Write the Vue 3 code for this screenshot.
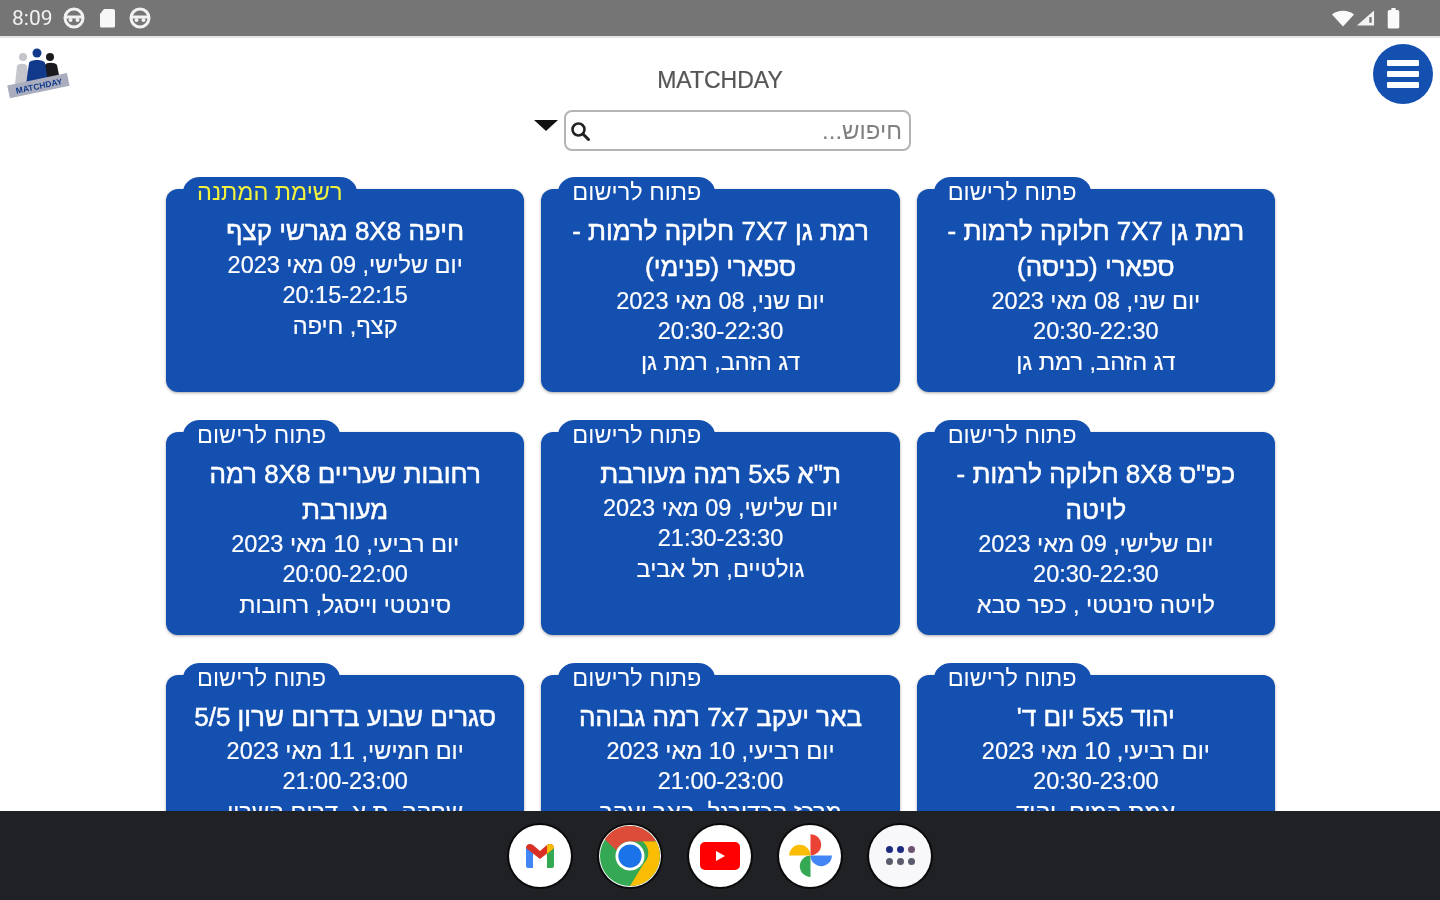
<script setup>
const events = [
  { status: 'פתוח לרישום', title: 'רמת גן 7X7 חלוקה לרמות - ספארי (כניסה)', date: 'יום שני, 08 מאי 2023', time: '20:30-22:30', place: 'דג הזהב, רמת גן' },
  { status: 'פתוח לרישום', title: 'רמת גן 7X7 חלוקה לרמות - ספארי (פנימי)', date: 'יום שני, 08 מאי 2023', time: '20:30-22:30', place: 'דג הזהב, רמת גן' },
  { status: 'רשימת המתנה', wait: true, title: 'חיפה 8X8 מגרשי קצף', date: 'יום שלישי, 09 מאי 2023', time: '20:15-22:15', place: 'קצף, חיפה' },
  { status: 'פתוח לרישום', title: 'כפ"ס 8X8 חלוקה לרמות - לויטה', date: 'יום שלישי, 09 מאי 2023', time: '20:30-22:30', place: 'לויטה סינטטי , כפר סבא' },
  { status: 'פתוח לרישום', title: 'ת"א 5x5 רמה מעורבת', date: 'יום שלישי, 09 מאי 2023', time: '21:30-23:30', place: 'גולטיים, תל אביב' },
  { status: 'פתוח לרישום', title: 'רחובות שעריים 8X8 רמה מעורבת', date: 'יום רביעי, 10 מאי 2023', time: '20:00-22:00', place: 'סינטטי וייסגל, רחובות' },
  { status: 'פתוח לרישום', title: "יהוד 5x5 יום ד'", date: 'יום רביעי, 10 מאי 2023', time: '20:30-23:00', place: 'אמת המים, יהוד' },
  { status: 'פתוח לרישום', title: 'באר יעקב 7x7 רמה גבוהה', date: 'יום רביעי, 10 מאי 2023', time: '21:00-23:00', place: 'מרכז הכדורגל, באר יעקב' },
  { status: 'פתוח לרישום', title: 'סגרים שבוע בדרום שרון 5/5', date: 'יום חמישי, 11 מאי 2023', time: '21:00-23:00', place: 'שחקה, ת.א, דרום השרון' },
]
</script>

<template>
  <div class="screen">
    <div class="status">
      <div class="status-side">
        <span class="clock">8:09</span>
        <svg class="si" viewBox="0 0 22 22"><circle cx="11" cy="11" r="9" fill="none" stroke="#f2f2f2" stroke-width="3"/><path d="M3 8.500h16v3H3z" fill="#f2f2f2"/><circle cx="7.500" cy="13" r="2" fill="#f2f2f2"/><circle cx="14.500" cy="13" r="2" fill="#f2f2f2"/></svg>
        <svg class="si sd" viewBox="0 0 18 20"><path d="M6 1h9a2 2 0 0 1 2 2v15a1.500 1.500 0 0 1-1.500 1.500h-12A1.500 1.500 0 0 1 2 18V6z" fill="#f7f7f7"/></svg>
        <svg class="si" viewBox="0 0 22 22"><circle cx="11" cy="11" r="9" fill="none" stroke="#f2f2f2" stroke-width="3"/><path d="M3 8.500h16v3H3z" fill="#f2f2f2"/><circle cx="7.500" cy="13" r="2" fill="#f2f2f2"/><circle cx="14.500" cy="13" r="2" fill="#f2f2f2"/></svg>
      </div>
      <div class="status-side">
        <svg class="wifi" viewBox="0 0 24 18"><path d="M1 5.500C7 .5 17 .5 23 5.500L12 17.500z" fill="#fafafa"/></svg>
        <svg class="signal" viewBox="0 0 20 18"><path d="M1 17 19 1v16z" fill="#f2f2f2"/><path d="M14 8h2.500v6H14z" fill="#757575"/></svg>
        <svg class="battery" viewBox="0 0 12 20"><path d="M4 0h4v2h2a1.500 1.500 0 0 1 1.500 1.500V18a1.500 1.500 0 0 1-1.500 1.500H2A1.500 1.500 0 0 1 .5 18V3.500A1.500 1.500 0 0 1 2 2h2z" fill="#fafafa"/></svg>
      </div>
    </div>

    <main class="content">
      <header class="top">
        <svg class="logo" viewBox="0 0 64 54">
          <circle cx="16" cy="9" r="4" fill="#c4c6cc"/>
          <path d="M8 36 10 18c1-3 9-3 10 0l3 18z" fill="#c4c6cc"/>
          <circle cx="43" cy="9" r="4" fill="#1a1a1f"/>
          <path d="M37 32 38 17c1-3 10-3 12 0l3 15z" fill="#1a1a1f"/>
          <circle cx="30" cy="5" r="4.500" fill="#123a8c"/>
          <path d="M19 37 22 15c1-4 15-4 16 0l3 19z" fill="#123a8c"/>
          <g transform="rotate(-12 32 38)">
            <rect x="1" y="31" width="61" height="13" fill="#a9adbd"/>
            <text x="32" y="41" text-anchor="middle" class="logo-text">MATCHDAY</text>
          </g>
        </svg>
        <h1 class="brand">MATCHDAY</h1>
        <button class="menu" type="button" aria-label="menu"><i></i><i></i><i></i></button>
      </header>

      <div class="search-row">
        <span class="caret"></span>
        <label class="search" dir="rtl">
          <input type="text" placeholder="חיפוש..." />
          <svg class="lens" viewBox="0 0 22 22"><circle cx="9.500" cy="9.500" r="6" fill="none" stroke="#222" stroke-width="2.600"/><path d="m14 14 5.500 5.500" stroke="#222" stroke-width="3" stroke-linecap="round"/></svg>
        </label>
      </div>

      <section class="grid" dir="rtl">
        <article v-for="(e, i) in events" :key="i" class="card">
          <div class="tab" :class="{ wait: e.wait }"><span>{{ e.status }}</span></div>
          <h2>{{ e.title }}</h2>
          <p>{{ e.date }}</p>
          <p>{{ e.time }}</p>
          <p>{{ e.place }}</p>
        </article>
      </section>
    </main>

    <nav class="dock">
      <div class="app">
        <svg viewBox="0 0 40 40"><path d="M6 32V12l5-3 2 4v19H8a2 2 0 0 1-2-2z" fill="#4285f4"/><path d="M34 32V12l-5-3-2 4v19h5a2 2 0 0 0 2-2z" fill="#34a853"/><path d="M6 12c0-4 4-5 7-3l7 6 7-6c3-2 7-1 7 3l-14 11z" fill="#d93025"/><path d="M27 9c3-2 7-1 7 3l-7 6z" fill="#fbbc04"/></svg>
      </div>
      <div class="app chrome">
        <svg viewBox="0 0 64 64"><circle cx="32" cy="32" r="31" fill="#34a853"/><path d="M32 1a31 31 0 0 1 27 16H32a15 15 0 0 0-14 9L6 15A31 31 0 0 1 32 1z" fill="#dd4b39"/><path d="M59 17a31 31 0 0 1-27 46l14-23a15 15 0 0 0-1-23z" fill="#fbbc04"/><circle cx="32" cy="32" r="15" fill="#fff"/><circle cx="32" cy="32" r="12" fill="#1a73e8"/></svg>
      </div>
      <div class="app">
        <svg viewBox="0 0 40 40"><rect x="0" y="6" width="40" height="28" rx="5" fill="#f00"/><path d="M16 15 25 20 16 25z" fill="#fff"/></svg>
      </div>
      <div class="app photos">
        <svg viewBox="0 0 40 40"><path d="M20 20V1a9.500 9.500 0 0 1 0 19z" fill="#ea4335"/><path d="M20 20h19a9.500 9.500 0 0 1-19 0z" fill="#4285f4"/><path d="M20 20v19a9.500 9.500 0 0 1 0-19z" fill="#34a853"/><path d="M20 20H1a9.500 9.500 0 0 1 19 0z" fill="#fbbc04"/></svg>
      </div>
      <div class="app apps">
        <span class="d1"></span><span class="d1"></span><span class="d2"></span>
        <span class="d3"></span><span class="d3"></span><span class="d3"></span>
      </div>
    </nav>
  </div>
</template>

<style>
html, body { margin: 0; background: #fff; }
</style>

<style scoped>
.screen {
  width: 1440px;
  height: 900px;
  display: flex;
  flex-direction: column;
  overflow: hidden;
  background: #fff;
  font-family: "Liberation Sans", Arimo, sans-serif;
  filter: blur(0.7px);
}
.status {
  height: 36px;
  flex: none;
  background: #757575;
  border-bottom: 2px solid #e4e4e4;
  box-sizing: content-box;
  display: flex;
  justify-content: space-between;
  align-items: center;
  padding: 0 40px 0 12px;
}
.status-side { display: flex; align-items: center; gap: 12px; }
.clock { color: #f2f2f2; font: 21px Roboto, sans-serif; margin-right: -2px; }
.si { width: 22px; height: 22px; }
.sd { width: 18px; height: 20px; margin: 0 1px; }
.wifi { width: 24px; height: 18px; margin-right: -11px; }
.signal { width: 19px; height: 18px; }
.battery { width: 13px; height: 21px; }

.content { flex: 1; min-height: 0; overflow: hidden; }
.top {
  display: grid;
  grid-template-columns: 1fr auto 1fr;
  align-items: start;
  padding: 6px 7px 0 7px;
  height: 65px;
  box-sizing: border-box;
}
.logo { width: 64px; height: 54px; margin-top: 4px; }
.logo-text { font: 900 8.500px "Liberation Sans", sans-serif; fill: #123a8c; }
.brand {
  margin: 23px 0 0;
  font: 400 23px/26px "Liberation Sans", sans-serif;
  color: #555;
  -webkit-text-stroke: .2px #555;
}
.menu {
  justify-self: end;
  width: 60px;
  height: 60px;
  padding: 0;
  border: none;
  border-radius: 50%;
  background: #1450b0;
  display: flex;
  flex-direction: column;
  align-items: center;
  justify-content: center;
  gap: 5px;
}
.menu i { width: 32px; height: 6px; background: #fff; border-radius: 1px; }

.search-row {
  display: flex;
  justify-content: center;
  gap: 6px;
  padding-left: 5px;
  margin-top: 7px;
}
.caret {
  margin-top: 10px;
  width: 0;
  height: 0;
  border-left: 12px solid transparent;
  border-right: 12px solid transparent;
  border-top: 11px solid #111;
}
.search {
  width: 347px;
  height: 41px;
  box-sizing: border-box;
  display: flex;
  align-items: center;
  border: 2px solid #b4b4b4;
  border-radius: 8px;
  padding: 0 7px 0 3px;
}
.search input {
  flex: 1;
  min-width: 0;
  border: none;
  outline: none;
  background: transparent;
  padding: 0;
  font: 24px "Liberation Sans", sans-serif;
}
.search input::placeholder { color: #808080; opacity: 1; }
.lens { width: 22px; height: 22px; flex: none; }

.grid {
  width: 1109px;
  margin: 38px 0 0 166px;
  display: grid;
  grid-template-columns: repeat(3, 1fr);
  gap: 40px 17px;
}
.card {
  position: relative;
  height: 203px;
  box-sizing: border-box;
  padding: 24px 20px 0;
  background: #1450b0;
  border-radius: 12px;
  box-shadow: 0 1px 3px rgba(0, 0, 0, .35);
  color: #fff;
  text-align: center;
}
.card h2 {
  margin: 0 0 1px;
  font-size: 26px;
  font-weight: 400;
  line-height: 36px;
  -webkit-text-stroke: .5px #fff;
}
.card p {
  margin: 0;
  font-size: 23.500px;
  line-height: 30.400px;
  -webkit-text-stroke: .2px #fff;
}
.tab {
  position: absolute;
  top: -12px;
  left: 31px;
  font-size: 23.500px;
}
.tab span {
  position: relative;
  z-index: 1;
  display: block;
  height: 24px;
  line-height: 30px;
}
.tab::before {
  content: "";
  position: absolute;
  top: 0;
  left: -14px;
  right: -14px;
  height: 24px;
  background: #1450b0;
  border-radius: 17px 17px 0 0 / 15px 15px 0 0;
}
.tab.wait { color: #f2f23c; }

.dock {
  height: 89px;
  flex: none;
  background: #202124;
  display: flex;
  justify-content: center;
  align-items: center;
  gap: 28px;
  position: relative;
}
.app {
  width: 62px;
  height: 62px;
  border-radius: 50%;
  background: #fff;
  box-shadow: 0 0 0 2px #0a0a0c;
  display: flex;
  align-items: center;
  justify-content: center;
}
.app svg { width: 40px; height: 40px; }
.chrome svg { width: 62px; height: 62px; }
.photos svg { width: 45px; height: 45px; }
.apps {
  display: grid;
  grid-template-columns: repeat(3, 7px);
  gap: 5px 4px;
  align-content: center;
  justify-content: center;
  background: #f8f8fb;
}
.apps span { width: 7px; height: 7px; border-radius: 50%; }
.d1 { background: #1c2a80; }
.d2 { background: #6d5570; }
.d3 { background: #5a5c6c; }
</style>
